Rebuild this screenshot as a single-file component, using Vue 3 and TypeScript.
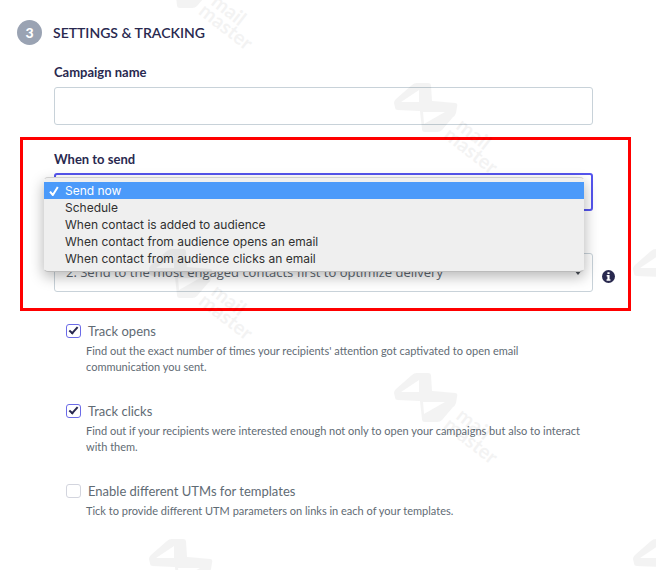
<script setup lang="ts">
import { ref } from 'vue'

interface Toggle {
  id: string
  label: string
  help: string
  on: boolean
}

interface Mark {
  x: number
  y: number
  named: boolean
}

const campaign = ref('')
const when = ref('Send now')
const strategy = ref('engaged')
const options: string[] = [
  'Send now',
  'Schedule',
  'When contact is added to audience',
  'When contact from audience opens an email',
  'When contact from audience clicks an email',
]
const toggles = ref<Toggle[]>([
  {
    id: 'opens',
    label: 'Track opens',
    help: "Find out the exact number of times your recipients' attention got captivated to open email communication you sent.",
    on: true,
  },
  {
    id: 'clicks',
    label: 'Track clicks',
    help: 'Find out if your recipients were interested enough not only to open your campaigns but also to interact with them.',
    on: true,
  },
  {
    id: 'utm',
    label: 'Enable different UTMs for templates',
    help: 'Tick to provide different UTM parameters on links in each of your templates.',
    on: false,
  },
])
const marks: Mark[] = [
  { x: 149, y: -42, named: true },
  { x: 394, y: 82, named: true },
  { x: 149, y: 248, named: true },
  { x: 633, y: 248, named: false },
  { x: 394, y: 372, named: true },
  { x: 149, y: 538, named: false },
  { x: 633, y: 538, named: false },
]
</script>

<template>
  <main class="page">
    <header class="head">
      <span class="step">3</span>
      <h1>SETTINGS &amp; TRACKING</h1>
    </header>

    <div class="field">
      <label for="campaign">Campaign name</label>
      <input id="campaign" v-model="campaign" class="box" type="text" />
    </div>

    <section class="callout">
      <label for="when">When to send</label>
      <div class="anchor">
        <select id="when" v-model="when" class="box active">
          <option v-for="o in options" :key="o">{{ o }}</option>
        </select>
        <ul class="menu" role="listbox" aria-label="When to send">
          <li
            v-for="o in options"
            :key="o"
            role="option"
            :aria-selected="o === when"
            :class="{ chosen: o === when }"
            @click="when = o"
          >
            <svg v-if="o === when" class="tick" viewBox="0 0 10 10" aria-hidden="true">
              <path d="M1 5.6 3.8 9 8.8 1" />
            </svg>
            <span>{{ o }}</span>
          </li>
        </ul>
      </div>
      <div class="row">
        <div class="drop">
          <select v-model="strategy" class="box" aria-label="Delivery">
            <option value="engaged">2. Send to the most engaged contacts first to optimize delivery</option>
          </select>
          <svg class="caret" viewBox="0 0 8 5" aria-hidden="true"><path d="M0 0h8L4 5z" /></svg>
        </div>
        <button class="info" type="button" aria-label="Info">
          <svg viewBox="0 0 12 12" aria-hidden="true">
            <circle cx="6" cy="6" r="6" />
            <path d="M5 2h2v1.7H5zM4.3 4.7H7v3.9h.8V10H4.2V8.600H5V6h-.7z" />
          </svg>
        </button>
      </div>
    </section>

    <div class="toggles">
      <div v-for="t in toggles" :key="t.id" class="toggle">
        <div class="line">
          <input :id="t.id" v-model="t.on" type="checkbox" />
          <label :for="t.id">{{ t.label }}</label>
        </div>
        <p>{{ t.help }}</p>
      </div>
    </div>

    <svg class="marks" aria-hidden="true">
      <g v-for="(m, i) in marks" :key="i" :transform="`translate(${m.x} ${m.y})`">
        <path
          fill-rule="evenodd"
          d="M2 17 18 3Q20 1 23 1H34Q37 1 37 4L38 19 61 21Q64 21 63 25L62 31Q61 34 59 35L48 48Q46 50 43 50H31Q28 50 28 47L26 29 4 28Q1 28 1 25L0 21Q0 19 2 17ZM7 20H25V8ZM29 30 30 42 51 30Z"
        />
        <g v-if="m.named" transform="translate(61 46) rotate(38)">
          <text x="0" y="0">mail</text>
          <text x="-4" y="15">master</text>
        </g>
      </g>
    </svg>
  </main>
</template>

<style>
body {
  margin: 0;
  background: #fff;
}
</style>

<style scoped>
* {
  box-sizing: border-box;
}
.page {
  position: relative;
  overflow: hidden;
  padding: 20px 25px 52px 20px;
  font-family: Lato, 'Open Sans', sans-serif;
  color: #29294f;
}
.head {
  display: flex;
  align-items: center;
  gap: 11px;
  margin-left: -3px;
}
.step {
  width: 25px;
  height: 25px;
  border-radius: 50%;
  background: #9aa3b3;
  color: #fff;
  font-size: 14px;
  font-weight: 900;
  line-height: 25px;
  text-align: center;
}
h1 {
  margin: 0;
  font-size: 14px;
  font-weight: 600;
  line-height: 24px;
}
.field {
  padding: 19px 38px 0 34px;
}
.field label,
.callout > label {
  display: block;
  font-size: 13px;
  font-weight: 700;
  line-height: 16px;
}
.box {
  display: block;
  width: 100%;
  height: 38px;
  padding: 0 11px;
  border: 1px solid #c8d2d9;
  border-radius: 3px;
  background: #fff;
  color: #5c6670;
  font-family: 'Open Sans', sans-serif;
  font-size: 13px;
  appearance: none;
  outline: none;
}
.field .box {
  margin-top: 7px;
}
.callout {
  margin-top: 12px;
  padding: 11px 12px 16px 31px;
  border: 3px solid #f00;
}
.anchor {
  position: relative;
  margin: 6px 23px 0 0;
}
.box.active {
  border: 2px solid #5454ee;
}
.menu {
  position: absolute;
  z-index: 2;
  top: 4px;
  right: 8px;
  left: -11px;
  margin: 0;
  padding: 4px 0;
  border: 1px solid #d2d2d2;
  border-color: #cfcfcf transparent #bbb;
  border-radius: 5px;
  background: #efefef;
  background-clip: padding-box;
  box-shadow: 0 5px 14px rgba(0, 0, 0, 0.28);
  color: #303030;
  font-family: Inter, sans-serif;
  font-size: 12px;
  line-height: 17px;
  list-style: none;
}
.menu li {
  display: flex;
  align-items: center;
  position: relative;
  padding-left: 21px;
}
.menu li.chosen {
  background: #4b9afa;
  color: #fff;
}
.tick {
  position: absolute;
  left: 5px;
  width: 10px;
  height: 10px;
  fill: none;
  stroke: #fff;
  stroke-width: 2;
}
.row {
  display: flex;
  align-items: center;
  gap: 9px;
  margin-top: 42px;
}
.drop {
  position: relative;
  flex: 1;
}
.drop .box {
  height: 39px;
  padding-bottom: 2px;
}
.caret {
  position: absolute;
  top: 17px;
  right: 11px;
  width: 8px;
  height: 5px;
  fill: #4a5058;
}
.info {
  width: 14px;
  height: 13px;
  margin-top: 8px;
  padding: 0;
  border: 0;
  background: none;
}
.info svg {
  display: block;
  width: 13px;
  height: 13px;
}
.info circle {
  fill: #29294f;
}
.info path {
  fill: #fff;
}
.toggles {
  display: flex;
  flex-direction: column;
  gap: 27px;
  padding: 11px 38px 0 46px;
  color: #5f6b74;
}
.line {
  display: flex;
  align-items: center;
  gap: 7px;
}
.line input {
  width: 15px;
  height: 14px;
  margin: 0;
  border: 1px solid #d3d5de;
  border-radius: 3px;
  background: #fff;
  appearance: none;
}
.line input:checked {
  border-color: #6b6be8;
}
.line input:checked::after {
  content: '';
  display: block;
  width: 7px;
  height: 3px;
  margin: 2px 0 0 2px;
  border: solid #29294f;
  border-width: 0 0 2px 2px;
  transform: rotate(-48deg);
}
.line label {
  font-size: 13px;
  line-height: 18px;
}
.toggle p {
  margin: 3px 0 0 20px;
  font-size: 11px;
  line-height: 16px;
}
.marks {
  position: absolute;
  z-index: 3;
  top: 0;
  left: 0;
  width: 100%;
  height: 100%;
  pointer-events: none;
  fill: #000;
  opacity: 0.045;
}
.marks text {
  font-family: Lato, sans-serif;
  font-size: 20px;
  font-weight: 700;
}
</style>
